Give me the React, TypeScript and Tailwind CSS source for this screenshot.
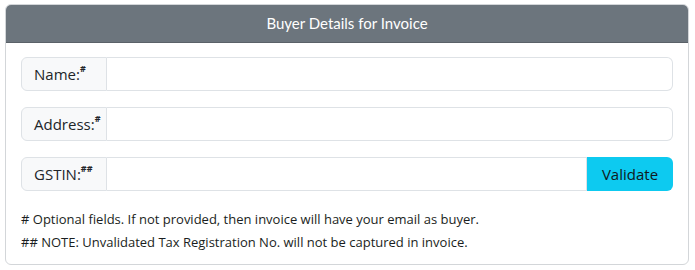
export default function App() {
  const fields = [
    { label: "Name:", mark: "#" },
    { label: "Address:", mark: "#" },
    { label: "GSTIN:", mark: "##", button: "Validate" },
  ];

  return (
    <div className="w-[695px] h-[270px] bg-white pt-[4px] pl-[5px]" style={{ fontFamily: '"Open Sans", sans-serif' }}>
      <div className="w-[684px] h-[261px] border border-[#d3d6d9] rounded-[6px] overflow-hidden">
        <div className="h-[38px] bg-[#6c757d] border-b border-[#5a6168] flex items-center justify-center text-white text-[15px]" style={{ fontFamily: 'Lato, sans-serif' }}>
          Buyer Details for Invoice
        </div>
        <div className="px-[15px] pt-[14px]">
          <div className="flex flex-col gap-[16px]">
            {fields.map((f) => (
              <div key={f.label} className="flex h-[34px] w-[652px]">
                <div className="w-[86px] shrink-0 flex items-center pl-[12px] bg-[#f8f9fa] border border-[#dee2e6] rounded-l-[6px] text-[15px] text-[#212529]">
                  {f.label}
                  <sup className="text-[9px] font-bold -mt-[2px]">{f.mark}</sup>
                </div>
                <input
                  className={`flex-1 min-w-0 border border-l-0 border-[#dee2e6] outline-none ${f.button ? "" : "rounded-r-[6px]"}`}
                />
                {f.button && (
                  <button className="w-[86px] shrink-0 bg-[#0dcaf0] rounded-r-[6px] text-[15px] text-[#101820]">
                    {f.button}
                  </button>
                )}
              </div>
            ))}
          </div>
          <div className="mt-[17px] text-[13px] leading-[23px] text-[#1a1e21]">
            <p># Optional fields. If not provided, then invoice will have your email as buyer.</p>
            <p>## NOTE: Unvalidated Tax Registration No. will not be captured in invoice.</p>
          </div>
        </div>
      </div>
    </div>
  );
}
